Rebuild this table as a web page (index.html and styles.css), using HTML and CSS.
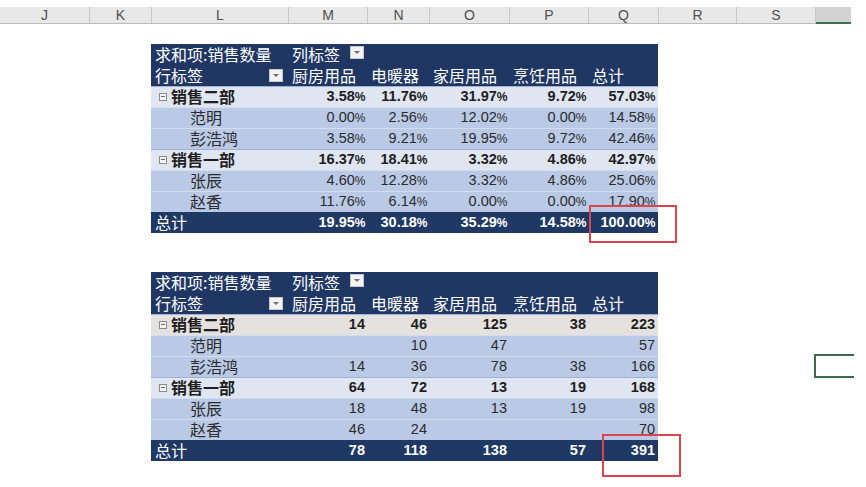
FILE: index.html
```html
<!DOCTYPE html>
<html lang="zh-CN">
<head>
<meta charset="utf-8">
<title>数据透视表</title>
<link rel="stylesheet" href="styles.css">
</head>
<body>
<div class="colhead">
  <div class="ch c-j">J</div>
  <div class="ch c-k">K</div>
  <div class="ch c-l">L</div>
  <div class="ch c-m">M</div>
  <div class="ch c-n">N</div>
  <div class="ch c-o">O</div>
  <div class="ch c-p">P</div>
  <div class="ch c-q">Q</div>
  <div class="ch c-r">R</div>
  <div class="ch c-s">S</div>
  <div class="ch c-t selected"></div>
</div>

<div class="sheet">
  <div class="pivot pivot-top">
    <table class="pt">
      <colgroup>
        <col class="w-l"><col class="w-m"><col class="w-n"><col class="w-o"><col class="w-p"><col class="w-q">
      </colgroup>
      <tr class="hd">
        <td class="lbl">求和项:销售数量</td>
        <td colspan="5" class="lbl"><div class="flexcell"><span>列标签</span><span class="dd dd-col"></span></div></td>
      </tr>
      <tr class="hd">
        <td class="lbl"><div class="flexcell split"><span>行标签</span><span class="dd"></span></div></td>
        <td class="lbl">厨房用品</td><td class="lbl">电暖器</td><td class="lbl">家居用品</td><td class="lbl">烹饪用品</td><td class="lbl">总计</td>
      </tr>
      <tr class="grp">
        <td class="lbl"><div class="flexcell"><span class="tog"></span><span>销售二部</span></div></td>
        <td class="num">3.58<span class="pc">%</span></td><td class="num">11.76<span class="pc">%</span></td><td class="num">31.97<span class="pc">%</span></td><td class="num">9.72<span class="pc">%</span></td><td class="num">57.03<span class="pc">%</span></td>
      </tr>
      <tr class="item">
        <td class="lbl name">范明</td>
        <td class="num">0.00<span class="pc">%</span></td><td class="num">2.56<span class="pc">%</span></td><td class="num">12.02<span class="pc">%</span></td><td class="num">0.00<span class="pc">%</span></td><td class="num">14.58<span class="pc">%</span></td>
      </tr>
      <tr class="item">
        <td class="lbl name">彭浩鸿</td>
        <td class="num">3.58<span class="pc">%</span></td><td class="num">9.21<span class="pc">%</span></td><td class="num">19.95<span class="pc">%</span></td><td class="num">9.72<span class="pc">%</span></td><td class="num">42.46<span class="pc">%</span></td>
      </tr>
      <tr class="grp">
        <td class="lbl"><div class="flexcell"><span class="tog"></span><span>销售一部</span></div></td>
        <td class="num">16.37<span class="pc">%</span></td><td class="num">18.41<span class="pc">%</span></td><td class="num">3.32<span class="pc">%</span></td><td class="num">4.86<span class="pc">%</span></td><td class="num">42.97<span class="pc">%</span></td>
      </tr>
      <tr class="item">
        <td class="lbl name">张辰</td>
        <td class="num">4.60<span class="pc">%</span></td><td class="num">12.28<span class="pc">%</span></td><td class="num">3.32<span class="pc">%</span></td><td class="num">4.86<span class="pc">%</span></td><td class="num">25.06<span class="pc">%</span></td>
      </tr>
      <tr class="item">
        <td class="lbl name">赵香</td>
        <td class="num">11.76<span class="pc">%</span></td><td class="num">6.14<span class="pc">%</span></td><td class="num">0.00<span class="pc">%</span></td><td class="num">0.00<span class="pc">%</span></td><td class="num">17.90<span class="pc">%</span></td>
      </tr>
      <tr class="tot">
        <td class="lbl">总计</td>
        <td class="num">19.95<span class="pc">%</span></td><td class="num">30.18<span class="pc">%</span></td><td class="num">35.29<span class="pc">%</span></td><td class="num">14.58<span class="pc">%</span></td><td class="num">100.00<span class="pc">%</span></td>
      </tr>
    </table>
    <div class="mark mark-top"></div>
  </div>

  <div class="pivot pivot-bottom">
    <table class="pt">
      <colgroup>
        <col class="w-l"><col class="w-m"><col class="w-n"><col class="w-o"><col class="w-p"><col class="w-q">
      </colgroup>
      <tr class="hd">
        <td class="lbl">求和项:销售数量</td>
        <td colspan="5" class="lbl"><div class="flexcell"><span>列标签</span><span class="dd dd-col"></span></div></td>
      </tr>
      <tr class="hd">
        <td class="lbl"><div class="flexcell split"><span>行标签</span><span class="dd"></span></div></td>
        <td class="lbl">厨房用品</td><td class="lbl">电暖器</td><td class="lbl">家居用品</td><td class="lbl">烹饪用品</td><td class="lbl">总计</td>
      </tr>
      <tr class="grp warm">
        <td class="lbl"><div class="flexcell"><span class="tog"></span><span>销售二部</span></div></td>
        <td class="num">14</td><td class="num">46</td><td class="num">125</td><td class="num">38</td><td class="num">223</td>
      </tr>
      <tr class="item">
        <td class="lbl name">范明</td>
        <td class="num"></td><td class="num">10</td><td class="num">47</td><td class="num"></td><td class="num">57</td>
      </tr>
      <tr class="item">
        <td class="lbl name">彭浩鸿</td>
        <td class="num">14</td><td class="num">36</td><td class="num">78</td><td class="num">38</td><td class="num">166</td>
      </tr>
      <tr class="grp">
        <td class="lbl"><div class="flexcell"><span class="tog"></span><span>销售一部</span></div></td>
        <td class="num">64</td><td class="num">72</td><td class="num">13</td><td class="num">19</td><td class="num">168</td>
      </tr>
      <tr class="item">
        <td class="lbl name">张辰</td>
        <td class="num">18</td><td class="num">48</td><td class="num">13</td><td class="num">19</td><td class="num">98</td>
      </tr>
      <tr class="item">
        <td class="lbl name">赵香</td>
        <td class="num">46</td><td class="num">24</td><td class="num"></td><td class="num"></td><td class="num">70</td>
      </tr>
      <tr class="tot">
        <td class="lbl">总计</td>
        <td class="num">78</td><td class="num">118</td><td class="num">138</td><td class="num">57</td><td class="num">391</td>
      </tr>
    </table>
    <div class="mark mark-bottom"></div>
  </div>
</div>

<div class="selcell"></div>
</body>
</html>
```

FILE: styles.css
```css
html, body {
  margin: 0;
  padding: 0;
  background: #ffffff;
}
body {
  width: 866px;
  height: 487px;
  position: relative;
  overflow: hidden;
  font-family: "Liberation Sans", "Noto Sans CJK SC", sans-serif;
}

/* column header band */
.colhead {
  display: flex;
  margin-top: 7px;
  height: 17px;
  width: 851px;
  background: #e8e8e8;
  border-bottom: 1px solid #bdbdbd;
  box-sizing: border-box;
}
.ch {
  box-sizing: border-box;
  height: 16px;
  line-height: 16px;
  text-align: center;
  font-size: 14px;
  color: #505050;
  border-right: 1px solid #c9c9c9;
}
.c-j { width: 90px; }
.c-k { width: 62px; }
.c-l { width: 137px; }
.c-m { width: 79px; }
.c-n { width: 62px; }
.c-o { width: 80px; }
.c-p { width: 79px; }
.c-q { width: 70px; }
.c-r { width: 78px; }
.c-s { width: 79px; }
.c-t { width: 35px; border-right: none; }
.ch.selected {
  background: #d3d3d3;
  height: 17px;
  border-bottom: 2px solid #3e7455;
}

/* pivot tables */
.sheet {
  padding-left: 151px;
}
.pivot {
  position: relative;
  width: 507px;
}
.pivot-top { margin-top: 20px; }
.pivot-bottom { margin-top: 39px; }

.pt {
  table-layout: fixed;
  width: 507px;
  border-collapse: collapse;
  border-spacing: 0;
}
.w-l { width: 138px; }
.w-m { width: 79px; }
.w-n { width: 62px; }
.w-o { width: 80px; }
.w-p { width: 79px; }
.w-q { width: 69px; }

.pt tr { height: 21px; }
.pt td {
  height: 21px;
  padding: 0;
  line-height: 21px;
  vertical-align: middle;
  white-space: nowrap;
  font-size: 16px;
  color: #1e1e1e;
}
.pt td.lbl {
  padding-left: 4px;
  font-family: "Noto Sans CJK SC", sans-serif;
}
.pt td.num {
  text-align: right;
  padding-right: 3px;
  font-size: 14.5px;
  font-family: "Liberation Sans", sans-serif;
}
.pc {
  font-size: 12px;
  line-height: 0;
  letter-spacing: -0.5px;
}

.flexcell {
  display: flex;
  align-items: center;
  height: 21px;
  line-height: 21px;
}
.split {
  justify-content: space-between;
  padding-right: 6px;
}

.hd td {
  background: #203764;
  color: #ffffff;
}
.hd td.lbl { padding-left: 4px; }
.hd td + td.lbl { padding-left: 3px; }

.dd {
  display: block;
  position: relative;
  width: 12px;
  height: 11px;
  background: #f3f3f3;
  border: 1px solid #c8c8c8;
  flex: none;
}
.dd::after {
  content: "";
  position: absolute;
  left: 3px;
  top: 4px;
  border-left: 3px solid transparent;
  border-right: 3px solid transparent;
  border-top: 3px solid #707070;
}
.dd-col { margin-left: 10px; margin-top: -4px; }

.grp td {
  background: #dfe5f1;
  font-weight: bold;
  box-shadow: inset 0 1px 0 #9fb2d6;
}
.grp.warm td {
  background: #e4e1de;
}
.grp td.lbl { padding-left: 8px; }
.tog {
  display: block;
  flex: none;
  box-sizing: border-box;
  width: 8px;
  height: 8px;
  border: 1px solid #8c8c8c;
  margin-right: 4px;
  position: relative;
  background: #f4f4f4;
}
.tog::after {
  content: "";
  position: absolute;
  left: 1px;
  top: 2.5px;
  width: 4px;
  height: 1px;
  background: #6a6a6a;
}

.item td {
  background: #b9c9e6;
  color: #2c2c2c;
  box-shadow: inset 0 1px 0 #d3ddef;
}
.item td.lbl.name { padding-left: 39px; }

.tot td {
  background: #1f3864;
  color: #ffffff;
  font-weight: bold;
}
.tot td.lbl { font-weight: normal; }

/* red highlight marks */
.mark {
  position: absolute;
  box-sizing: border-box;
  border: 2px solid #d8464d;
}
.mark-top {
  left: 438px;
  top: 161px;
  width: 88px;
  height: 38px;
}
.mark-bottom {
  left: 451px;
  top: 162px;
  width: 79px;
  height: 43px;
}

/* selected cell */
.selcell {
  position: absolute;
  left: 814px;
  top: 354px;
  width: 40px;
  height: 24px;
  box-sizing: border-box;
  border: 2px solid #3b6a4e;
  border-right: none;
}
```
